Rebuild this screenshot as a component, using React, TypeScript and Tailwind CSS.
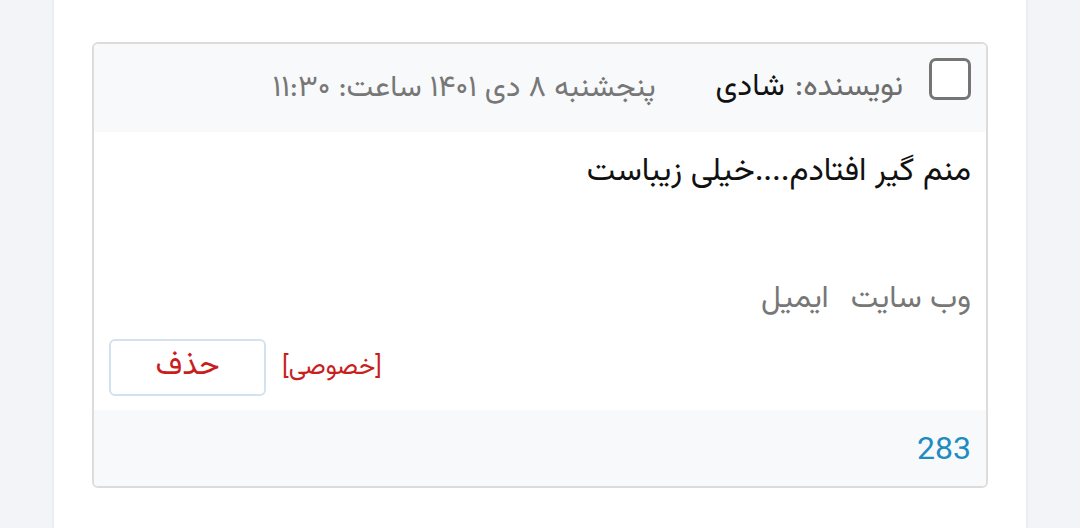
import React from "react";

const FONT = { fontFamily: "Vazirmatn, 'DejaVu Sans', Roboto, sans-serif" };

export default function App() {
  return (
    <div dir="rtl" className="flex h-[528px] w-[1080px] bg-[#f2f4f7]" style={FONT}>
      <div className="w-[52px] shrink-0" />
      <main className="flex-1 border-x-2 border-[#e9eef4] bg-white px-[38px] pt-[42px]">
        <div className="overflow-hidden rounded-[6px] border-2 border-[#dcdcdc]">
          <div className="flex h-[88px] items-center bg-[#f8f9fa] pr-[15px]">
            <span className="mb-[18px] h-[42px] w-[42px] shrink-0 rounded-[7px] border-[3px] border-[#757575] bg-white" />
            <div className="mr-[26px] flex items-center text-[31px] text-[#6e6e6e]">
              <span>نویسنده:</span>
              <span className="mr-[10px] text-[#111]">شادی</span>
            </div>
            <div className="mr-[60px] text-[30px] text-[#777]">
              پنجشنبه ۸ دی ۱۴۰۱ ساعت: ۱۱:۳۰
            </div>
          </div>
          <div className="bg-white px-[15px] pb-[14px] pt-[19px]">
            <p className="text-[32px] leading-[42px] text-[#111]">منم گیر افتادم....خیلی زیباست</p>
            <div className="mt-[87px] flex gap-[22px] text-[31px] leading-[40px] text-[#777]">
              <span>وب سایت</span>
              <span>ایمیل</span>
            </div>
            <div className="mt-[19px] flex items-center justify-end gap-[16px]">
              <span className="text-[25px] text-[#c81e1e]">[خصوصی]</span>
              <button className="flex h-[57px] w-[157px] items-center justify-center rounded-[6px] border-2 border-[#d3e2ee] bg-white text-[31px] text-[#c81e1e]">
                حذف
              </button>
            </div>
          </div>
          <div className="flex h-[76px] items-center bg-[#f8f9fa] px-[15px]">
            <span className="text-[32px] text-[#1e8bc3]" style={{ fontFamily: "Roboto, sans-serif" }}>
              283
            </span>
          </div>
        </div>
      </main>
      <div className="w-[52px] shrink-0" />
    </div>
  );
}
